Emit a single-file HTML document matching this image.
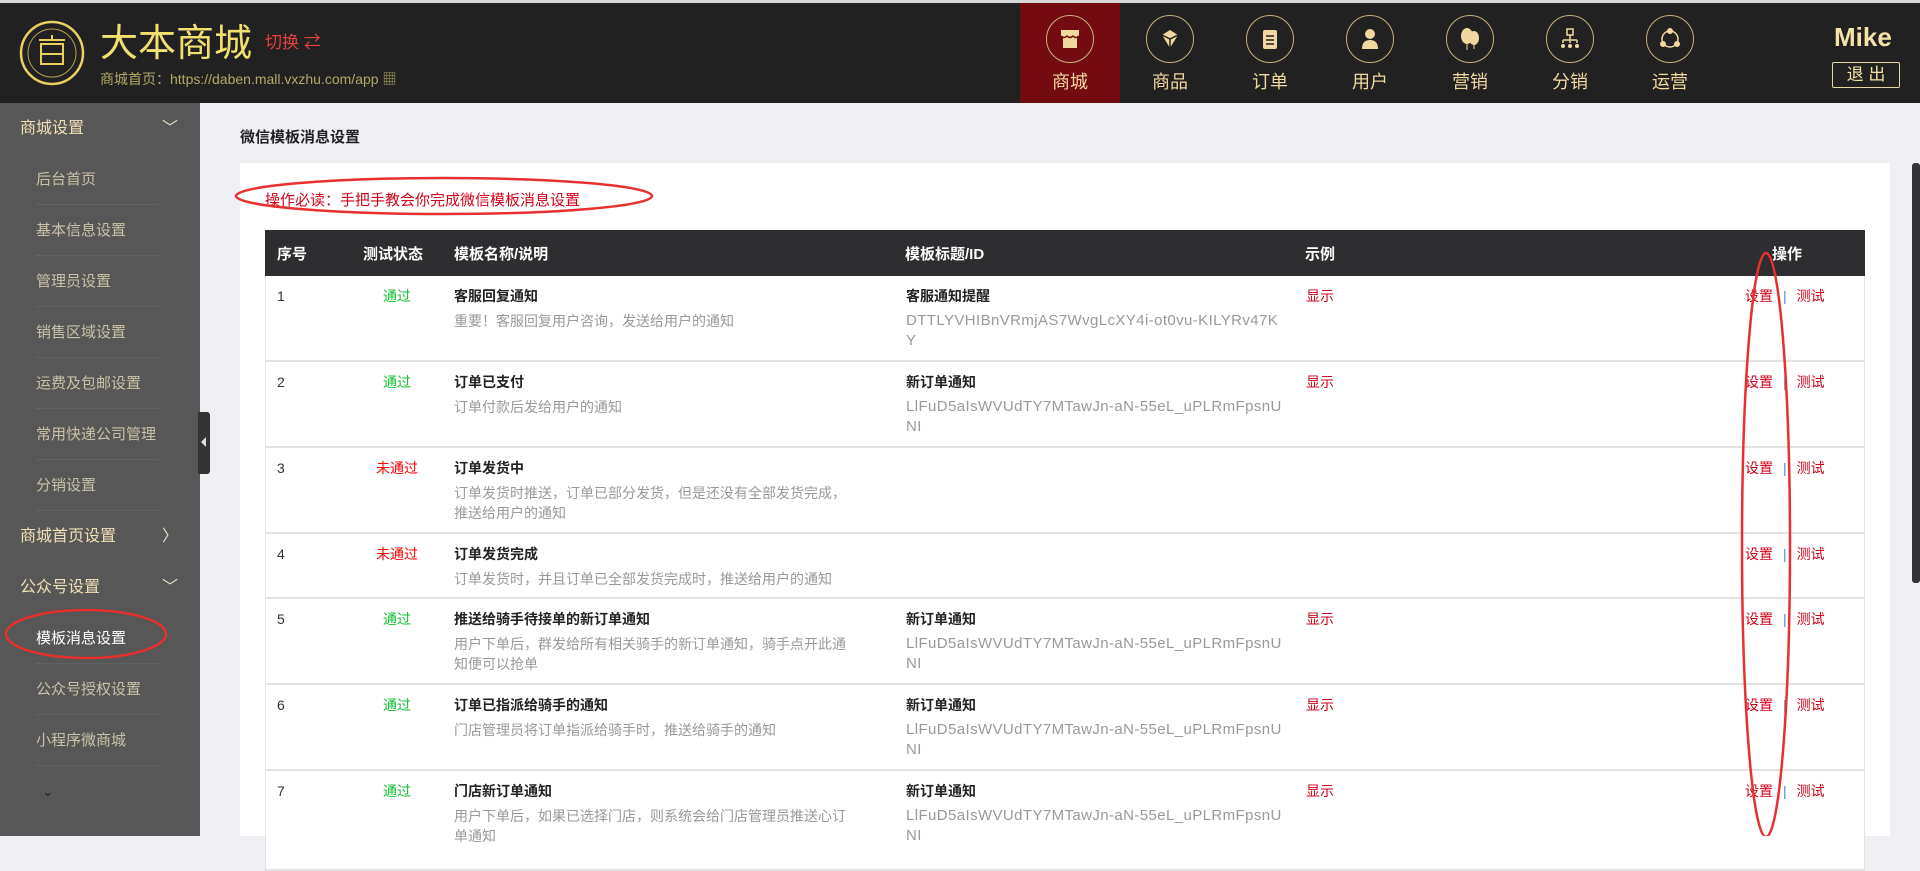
<!DOCTYPE html>
<html><head><meta charset="utf-8"><style>
*{margin:0;padding:0;box-sizing:border-box}
body{width:1920px;height:836px;overflow:hidden;background:#efeff4;font-family:"Liberation Sans","Noto Sans CJK SC",sans-serif;position:relative}
.abs{position:absolute}
#top{left:0;top:0;width:1920px;height:3px;background:#d8d8d8}
#hdr{left:0;top:3px;width:1920px;height:100px;background:#212121}
.nav{position:absolute;top:3px;width:100px;height:100px;text-align:center}
.nav .c{position:absolute;left:26px;top:12px;width:48px;height:48px;border:1.5px solid #c9b27a;border-radius:50%}
.nav .t{position:absolute;left:0;width:100px;top:67px;font-size:18px;color:#f0d8a0;line-height:24px}
#side{left:0;top:103px;width:200px;height:733px;background:#575757}
.si{position:absolute;left:0;width:200px;height:51px;line-height:51px;font-size:16px}
.sec{color:#f0e0b8;padding-left:20px}
.it{color:#c9c2a8;padding-left:36px;font-size:15px}
.it:after{content:"";position:absolute;left:36px;right:42px;bottom:0;border-bottom:1px solid #626262}
.chev{position:absolute;right:22px;top:0;color:#e8e0c8;font-size:16px}
#panel{left:240px;top:163px;width:1650px;height:673px;background:#fff}
#th{left:265px;top:230px;width:1600px;height:46px;background:#2e2d30;color:#fff;font-weight:bold;font-size:15px}
#th span{position:absolute;top:13px}
.row{position:absolute;left:265px;width:1600px;border-left:1px solid #e4e4e4;border-right:1px solid #e4e4e4;border-bottom:2px solid #e2e2e2;background:#fff;font-size:14px}
.row div{position:absolute;line-height:22px}
.n{left:11px;top:9px;color:#333}
.s{left:75px;width:112px;text-align:center;top:9px}
.ok{color:#10c030}.no{color:#f00}
.nm{left:188px;top:9px;width:428px}
.nm b{display:block;color:#222}
.nm i,.id i{display:block;font-style:normal;color:#999;margin-top:4px;line-height:20px}
.id{left:640px;top:9px;width:420px;white-space:nowrap}
.id i{font-size:15px;letter-spacing:0.4px}
.id b{display:block;color:#222}
.ex{left:1040px;top:9px;color:#d0021b}
.op{left:1479px;top:9px;color:#d0021b}
.op em{font-style:normal;color:#4a8ad0;margin:0 10px}
</style></head><body>
<div id="top" class="abs"></div>
<div id="hdr" class="abs"></div>
<svg class="abs" style="left:19px;top:20px" width="66" height="66" viewBox="0 0 66 66">
<circle cx="33" cy="33" r="31" fill="none" stroke="#e8d060" stroke-width="2.5"/>
<circle cx="33" cy="33" r="24" fill="none" stroke="#b8a050" stroke-width="1"/>
<rect x="22" y="24" width="22" height="20" fill="none" stroke="#e8d060" stroke-width="2"/>
<line x1="20" y1="20" x2="46" y2="20" stroke="#e8d060" stroke-width="2"/>
<line x1="33" y1="15" x2="33" y2="20" stroke="#e8d060" stroke-width="2"/>
<line x1="22" y1="34" x2="44" y2="34" stroke="#e8d060" stroke-width="2"/>
</svg>
<div class="abs" style="left:100px;top:22px;font-size:38px;color:#f0e070;line-height:44px">大本商城</div>
<div class="abs" style="left:265px;top:32px;font-size:17px;color:#e84040;line-height:22px">切换 ⇄</div>
<div class="abs" style="left:100px;top:70px;font-size:14px;color:#b0a868;line-height:18px">商城首页：https://daben.mall.vxzhu.com/app ▦</div>

<div class="nav" style="left:1020px;background:#740b10"><div class="c"></div><svg class="abs" style="left:38px;top:24px" width="24" height="24"><path d="M3 3h18v6H3z M5 9h14v12H5z" fill="#f0d8a0"/><path d="M3 9q3 3 6 0q3 3 6 0q3 3 6 0" stroke="#740b10" fill="none" stroke-width="1.5"/></svg><div class="t">商城</div></div>
<div class="nav" style="left:1120px"><div class="c"></div><svg class="abs" style="left:38px;top:24px" width="24" height="24"><path d="M4 8l8-5 8 5-8 13z" fill="#f0d8a0"/><path d="M4 8l8 4 8-4M12 12v9" stroke="#212121" stroke-width="1.5" fill="none"/></svg><div class="t">商品</div></div>
<div class="nav" style="left:1220px"><div class="c"></div><svg class="abs" style="left:38px;top:24px" width="24" height="24"><rect x="5" y="3" width="14" height="19" rx="2" fill="#f0d8a0"/><path d="M8 9h8M8 13h8M8 17h8" stroke="#212121" stroke-width="1.5"/></svg><div class="t">订单</div></div>
<div class="nav" style="left:1320px"><div class="c"></div><svg class="abs" style="left:38px;top:24px" width="24" height="24"><circle cx="12" cy="7" r="5" fill="#f0d8a0"/><path d="M4 22q0-9 8-9t8 9z" fill="#f0d8a0"/></svg><div class="t">用户</div></div>
<div class="nav" style="left:1420px"><div class="c"></div><svg class="abs" style="left:38px;top:24px" width="24" height="24"><ellipse cx="9" cy="9" rx="6" ry="8" fill="#f0d8a0"/><ellipse cx="16" cy="11" rx="5" ry="7" fill="#f0d8a0"/><path d="M9 17v6M16 18v4" stroke="#f0d8a0"/></svg><div class="t">营销</div></div>
<div class="nav" style="left:1520px"><div class="c"></div><svg class="abs" style="left:38px;top:24px" width="24" height="24"><rect x="9" y="2" width="6" height="6" fill="none" stroke="#f0d8a0" stroke-width="1.5"/><path d="M12 8v5M5 13h14M5 13v3M12 13v3M19 13v3" stroke="#f0d8a0" stroke-width="1.5" fill="none"/><circle cx="5" cy="19" r="2" fill="#f0d8a0"/><circle cx="12" cy="19" r="2" fill="#f0d8a0"/><circle cx="19" cy="19" r="2" fill="#f0d8a0"/></svg><div class="t">分销</div></div>
<div class="nav" style="left:1620px"><div class="c"></div><svg class="abs" style="left:38px;top:24px" width="24" height="24"><circle cx="12" cy="12" r="8" fill="none" stroke="#f0d8a0" stroke-width="1.5"/><circle cx="12" cy="4" r="3" fill="#f0d8a0"/><circle cx="5" cy="17" r="3" fill="#f0d8a0"/><circle cx="19" cy="17" r="3" fill="#f0d8a0"/></svg><div class="t">运营</div></div>
<div class="abs" style="left:1834px;top:22px;font-size:26px;font-weight:bold;color:#f3e3a8">Mike</div>
<div class="abs" style="left:1832px;top:62px;width:68px;height:26px;border:1px solid #e8d8a8;border-radius:2px;color:#f3e3a8;font-size:17px;text-align:center;line-height:24px">退 出</div>

<div id="side" class="abs">
<div class="si sec" style="top:0">商城设置<span class="chev">﹀</span></div>
<div class="si it" style="top:51px">后台首页</div>
<div class="si it" style="top:102px">基本信息设置</div>
<div class="si it" style="top:153px">管理员设置</div>
<div class="si it" style="top:204px">销售区域设置</div>
<div class="si it" style="top:255px">运费及包邮设置</div>
<div class="si it" style="top:306px">常用快递公司管理</div>
<div class="si it" style="top:357px">分销设置</div>
<div class="si sec" style="top:408px">商城首页设置<span class="chev">〉</span></div>
<div class="si sec" style="top:459px">公众号设置<span class="chev">﹀</span></div>
<div class="si it" style="top:510px;color:#fff">模板消息设置</div>
<div class="si it" style="top:561px">公众号授权设置</div>
<div class="si it" style="top:612px">小程序微商城</div>
<div class="si" style="top:663px;left:42px;color:#222;font-size:14px">⌄</div>
</div>
<div class="abs" style="left:198px;top:412px;width:12px;height:62px;background:#333;border-radius:0 3px 3px 0"></div>
<div class="abs" style="left:201px;top:437px;width:0;height:0;border:5px solid transparent;border-right-color:#ddd;border-left:0"></div>

<div class="abs" style="left:240px;top:126px;font-size:15px;font-weight:bold;color:#222">微信模板消息设置</div>
<div id="panel" class="abs"></div>
<div class="abs" style="left:1912px;top:163px;width:8px;height:420px;background:#333;border-radius:3px"></div>
<div class="abs" style="left:265px;top:189px;font-size:15px;color:#d0021b">操作必读：手把手教会你完成微信模板消息设置</div>

<div id="th" class="abs"><span style="left:12px">序号</span><span style="left:98px">测试状态</span><span style="left:189px">模板名称/说明</span><span style="left:640px">模板标题/ID</span><span style="left:1040px">示例</span><span style="left:1507px">操作</span></div>

<div class="row" style="top:276px;height:86px"><div class="n">1</div><div class="s ok">通过</div><div class="nm"><b>客服回复通知</b><i>重要！客服回复用户咨询，发送给用户的通知</i></div><div class="id"><b>客服通知提醒</b><i>DTTLYVHIBnVRmjAS7WvgLcXY4i-ot0vu-KILYRv47K<br>Y</i></div><div class="ex">显示</div><div class="op">设置<em>|</em>测试</div></div>
<div class="row" style="top:362px;height:86px"><div class="n">2</div><div class="s ok">通过</div><div class="nm"><b>订单已支付</b><i>订单付款后发给用户的通知</i></div><div class="id"><b>新订单通知</b><i>LlFuD5aIsWVUdTY7MTawJn-aN-55eL_uPLRmFpsnU<br>NI</i></div><div class="ex">显示</div><div class="op">设置<em>|</em>测试</div></div>
<div class="row" style="top:448px;height:86px"><div class="n">3</div><div class="s no">未通过</div><div class="nm"><b>订单发货中</b><i>订单发货时推送，订单已部分发货，但是还没有全部发货完成，<br>推送给用户的通知</i></div><div class="op">设置<em>|</em>测试</div></div>
<div class="row" style="top:534px;height:65px"><div class="n">4</div><div class="s no">未通过</div><div class="nm"><b>订单发货完成</b><i>订单发货时，并且订单已全部发货完成时，推送给用户的通知</i></div><div class="op">设置<em>|</em>测试</div></div>
<div class="row" style="top:599px;height:86px"><div class="n">5</div><div class="s ok">通过</div><div class="nm"><b>推送给骑手待接单的新订单通知</b><i>用户下单后，群发给所有相关骑手的新订单通知，骑手点开此通<br>知便可以抢单</i></div><div class="id"><b>新订单通知</b><i>LlFuD5aIsWVUdTY7MTawJn-aN-55eL_uPLRmFpsnU<br>NI</i></div><div class="ex">显示</div><div class="op">设置<em>|</em>测试</div></div>
<div class="row" style="top:685px;height:86px"><div class="n">6</div><div class="s ok">通过</div><div class="nm"><b>订单已指派给骑手的通知</b><i>门店管理员将订单指派给骑手时，推送给骑手的通知</i></div><div class="id"><b>新订单通知</b><i>LlFuD5aIsWVUdTY7MTawJn-aN-55eL_uPLRmFpsnU<br>NI</i></div><div class="ex">显示</div><div class="op">设置<em>|</em>测试</div></div>
<div class="row" style="top:771px;height:100px"><div class="n">7</div><div class="s ok">通过</div><div class="nm"><b>门店新订单通知</b><i>用户下单后，如果已选择门店，则系统会给门店管理员推送心订<br>单通知</i></div><div class="id"><b>新订单通知</b><i>LlFuD5aIsWVUdTY7MTawJn-aN-55eL_uPLRmFpsnU<br>NI</i></div><div class="ex">显示</div><div class="op">设置<em>|</em>测试</div></div>

<svg class="abs" style="left:0;top:0" width="1920" height="836">
<ellipse cx="444" cy="196" rx="208" ry="18" fill="none" stroke="#e83030" stroke-width="2.5"/>
<ellipse cx="86" cy="634" rx="80" ry="24" fill="none" stroke="#e83030" stroke-width="2.5"/>
<ellipse cx="1766" cy="545" rx="24" ry="292" fill="none" stroke="#e83030" stroke-width="2.5"/>
</svg>
</body></html>
